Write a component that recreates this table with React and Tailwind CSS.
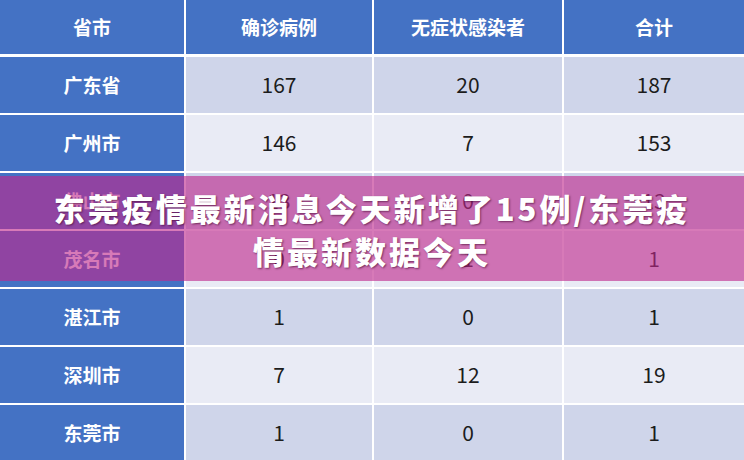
const rows = [
  { city: "广东省", confirmed: "167", asym: "20", total: "187" },
  { city: "广州市", confirmed: "146", asym: "7", total: "153" },
  { city: "佛山市", confirmed: "13", asym: "0", total: "13" },
  { city: "茂名市", confirmed: "0", asym: "1", total: "1" },
  { city: "湛江市", confirmed: "1", asym: "0", total: "1" },
  { city: "深圳市", confirmed: "7", asym: "12", total: "19" },
  { city: "东莞市", confirmed: "1", asym: "0", total: "1" },
];

const headers = ["省市", "确诊病例", "无症状感染者", "合计"];

const font = { fontFamily: '"Noto Sans CJK SC", "Noto Sans", sans-serif' };

const App = () => {
  return (
    <div className="relative w-[744px] h-[460px] overflow-hidden bg-white" style={font}>
      <div className="grid grid-cols-[184px_186px_188px_1fr] gap-x-[2px] bg-white">
        {headers.map((h) => (
          <div
            key={h}
            className="h-[54px] flex items-center justify-center bg-[#4472C4] text-white text-[19px] font-bold"
          >
            {h}
          </div>
        ))}
      </div>
      <div className="grid grid-cols-[184px_186px_188px_1fr] gap-x-[2px] gap-y-[2px] mt-[3px] bg-white">
        {rows.map((r, i) => {
          const cellBg = i % 2 === 0 ? "bg-[#CFD5EA]" : "bg-[#E9EBF5]";
          return [
            <div
              key={r.city}
              className="h-[56px] flex items-center justify-center bg-[#4472C4] text-white text-[19px] font-bold"
            >
              {r.city}
            </div>,
            <div key={r.city + "c"} className={`h-[56px] flex items-center justify-center text-[21px] text-[#1c1c1c] ${cellBg}`}>
              {r.confirmed}
            </div>,
            <div key={r.city + "a"} className={`h-[56px] flex items-center justify-center text-[21px] text-[#1c1c1c] ${cellBg}`}>
              {r.asym}
            </div>,
            <div key={r.city + "t"} className={`h-[56px] flex items-center justify-center text-[21px] text-[#1c1c1c] ${cellBg}`}>
              {r.total}
            </div>,
          ];
        })}
      </div>

      {/* title banner over the table */}
      <div className="absolute left-0 right-0 top-[176px] h-[105px] bg-[rgba(190,40,140,0.62)] flex items-center justify-center">
        <div className="text-white text-[31px] font-black leading-[43px] tracking-[3px] text-center px-[40px] [text-shadow:1px_1px_2px_rgba(60,0,40,0.6)]">
          东莞疫情最新消息今天新增了15例/东莞疫情最新数据今天
        </div>
      </div>
    </div>
  );
};

export default App;
